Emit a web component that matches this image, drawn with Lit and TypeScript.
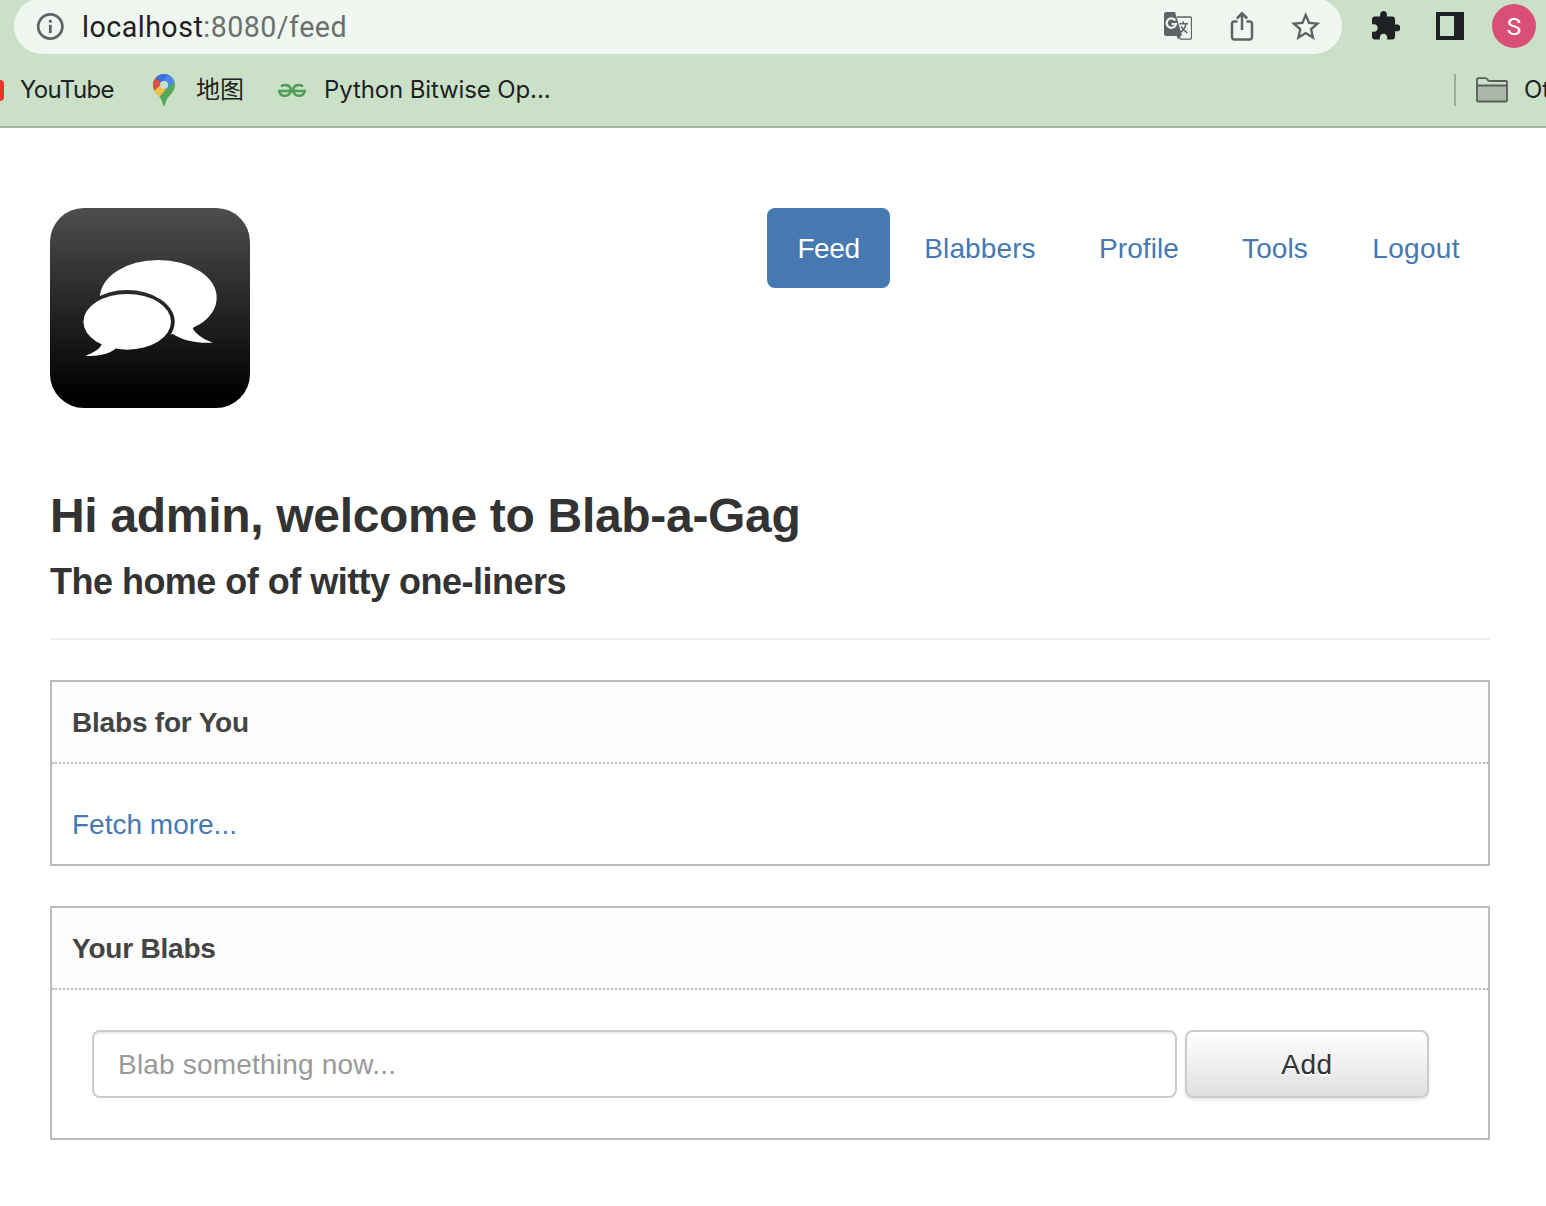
import { LitElement, html, css, svg } from "lit";
import { customElement } from "lit/decorators.js";

const infoIcon = svg`<svg class="i-info" viewBox="0 0 28 28" width="28" height="28"><circle cx="14.300" cy="14.500" r="12.100" fill="none" stroke="#5f6368" stroke-width="2.700"/><rect x="12.900" y="7.900" width="2.800" height="2.800" fill="#5f6368"/><rect x="12.900" y="12.900" width="2.800" height="8.100" fill="#5f6368"/></svg>`;

const translateIcon = svg`<svg viewBox="0 0 28 28" width="28" height="28"><path d="M13 5h13a1.500 1.500 0 0 1 1.500 1.500v19.200a1.500 1.500 0 0 1-1.500 1.500H16.500L13 22" fill="none" stroke="#5f6368" stroke-width="1.300"/><path d="M2 0h9l1.300 4.300 5.600 18.700-4 4.500L12.800 24H2a2 2 0 0 1-2-2V2a2 2 0 0 1 2-2z" fill="#5f6368"/><path d="M11.300 8.500A4.700 4.700 0 1 0 12 12H7.600" fill="none" stroke="#f0f7f0" stroke-width="2.200"/><path d="M15.500 11.700h8.500M19.200 9.300v2.400M22 12c-.8 3.800-3 6.800-6.500 9M17 14.200c1.200 2.600 3.200 4.800 6.400 6.800" fill="none" stroke="#5f6368" stroke-width="1.500"/></svg>`;

const shareIcon = svg`<svg viewBox="0 0 24 30" width="24" height="30"><path d="M7.500 10.500H4.200A2.200 2.200 0 0 0 2 12.700v13.600A2.200 2.200 0 0 0 4.200 28.500h15.600a2.200 2.200 0 0 0 2.200-2.200V12.700A2.200 2.200 0 0 0 19.800 10.500h-3.300M12 19V3M6.800 7.500L12 2.300 17.200 7.500" fill="none" stroke="#5f6368" stroke-width="2.500"/></svg>`;

const starIcon = svg`<svg viewBox="2 2 20 19" width="29.400" height="28"><path fill="#5f6368" d="M22 9.240l-7.190-.62L12 2 9.190 8.630 2 9.240l5.460 4.730L5.820 21 12 17.270 18.180 21l-1.630-7.030L22 9.240zM12 15.400l-3.760 2.270 1-4.280-3.320-2.880 4.380-.38L12 6.100l1.710 4.040 4.380.38-3.320 2.880 1 4.280L12 15.400z"/></svg>`;

const puzzleIcon = svg`<svg viewBox="2 1 21 21" width="28.500" height="28.500"><path fill="#202124" d="M20.500 11H19V7c0-1.100-.9-2-2-2h-4V3.500C13 2.120 11.880 1 10.500 1S8 2.120 8 3.500V5H4c-1.100 0-1.990.9-1.990 2v3.800H3.500c1.490 0 2.700 1.210 2.700 2.700s-1.210 2.700-2.700 2.700H2V20c0 1.100.9 2 2 2h3.800v-1.500c0-1.490 1.210-2.700 2.700-2.700 1.490 0 2.700 1.210 2.700 2.700V22H17c1.100 0 2-.9 2-2v-4h1.500c1.380 0 2.500-1.120 2.500-2.500S21.880 11 20.500 11z"/></svg>`;

const panelIcon = svg`<svg viewBox="0 0 28 28" width="28" height="28"><path fill="#202124" fill-rule="evenodd" d="M0 0h28v28H0zM4 4v20h14V4z"/></svg>`;

const mapsIcon = svg`<svg viewBox="0 0 22 32" width="22" height="32"><defs><clipPath id="pin"><path d="M11 0a11 11 0 0 1 11 11c0 7-4.500 8.800-7.600 13.500C12.400 27.600 12.300 32 11 32s-1.400-4.400-3.400-7.500C4.500 19.800 0 18 0 11A11 11 0 0 1 11 0z"/></clipPath></defs><g clip-path="url(#pin)"><rect width="22" height="32" fill="#57a75b"/><path d="M15 13L2 28-6 20 8 6z" fill="#f4c044"/><path d="M-2 19.500L11 8 2 2-4 8z" fill="#d8503f"/><path d="M2 3.500L8.500 9 18 0H2z" fill="#3871e0"/><path d="M8.500 9L16 0l6 7-9.500 9z" fill="#5186ec"/></g><circle cx="11" cy="11" r="4.100" fill="#cbe1c7"/></svg>`;

const geeksIcon = svg`<svg viewBox="0 0 28 16" width="28" height="16"><g fill="none" stroke="#4f9d58" stroke-width="2.600"><path d="M3 4.600C5.500 2 11.500 2.600 12.600 6.500c.8 4.300-1.800 7.300-5.600 7.300S1.500 12 1.500 8.500M25 4.600C22.500 2 16.500 2.600 15.400 6.500c-.8 4.300 1.800 7.300 5.600 7.300s5.500-1.800 5.500-5.300"/><path d="M0 9h28"/></g></svg>`;

const folderIcon = svg`<svg viewBox="0 0 32 26" width="32" height="26"><path d="M1 8.500h30V24H1z" fill="#a9b8a7"/><path d="M1 8.500V2.500A1.300 1.300 0 0 1 2.300 1.200H9.500c1.700 0 2.200 2.800 3.800 2.800H30a1 1 0 0 1 1 1v18.500a1 1 0 0 1-1 1H2a1 1 0 0 1-1-1V8.500h30" fill="none" stroke="#5a5d5a" stroke-width="1.800"/></svg>`;

const logo = svg`<svg viewBox="0 0 200 200" width="200" height="200"><defs><linearGradient id="shade" x1="0" y1="0" x2="0" y2="1"><stop offset="0" stop-color="#4e4e4e"/><stop offset=".95" stop-color="#000"/></linearGradient><mask id="gap"><rect width="200" height="200" fill="#fff"/><ellipse cx="77.200" cy="113.800" rx="47.500" ry="31.700" fill="#000"/></mask></defs><rect width="200" height="200" rx="34" fill="url(#shade)"/><g mask="url(#gap)" fill="#fff"><ellipse cx="108.300" cy="89.700" rx="58.400" ry="37.700"/><path d="M142.300 119.300C145 126 153 131 163 134.700 148 135.500 132 133 121.700 125.300L118 115z"/></g><ellipse cx="77.200" cy="113.800" rx="43.800" ry="27.900" fill="#fff"/><path d="M51.700 136.300C50 141 43 145 35.700 147.700 46 148.500 57 147 65.300 141L66 134z" fill="#fff"/></svg>`;

@customElement("app-root")
export class AppRoot extends LitElement {
  static styles = css`
    :host { display: block; height: 1206px; overflow: hidden; background: #fff; color: #333; font: 28px/40px "Liberation Sans", Arial, sans-serif; }
    * { box-sizing: border-box; }
    svg { display: block; flex: none; }
    .chrome { height: 128px; background: #cbe1c7; border-bottom: 2px solid #a3b4a0; color: #202124; overflow: hidden; }
    .toolbar { height: 54px; display: flex; align-items: center; }
    .omnibox { width: 1328px; height: 56px; margin: -2px 0 0 14px; border-radius: 28px; background: #f0f7f0; display: flex; align-items: center; padding: 0 21.500px 0 22px; flex: none; }
    .url { flex: 1; margin-left: 18px; padding-top: 1px; font: 28.600px/40px Roboto, sans-serif; letter-spacing: .48px; color: #6b706d; }
    .host { color: #202124; }
    .share { margin: 0 37.500px 0 38px; }
    .puzzle { margin: -3px 0 0 29.500px; }
    .panel { margin: -2px 0 0 36px; }
    .avatar { width: 44px; height: 44px; margin: -2px 0 0 28px; border-radius: 50%; background: #d94f78; color: #fff; font: 24.500px/45px Roboto, sans-serif; text-align: center; flex: none; }
    .bookmarks { height: 72px; display: flex; align-items: center; font: 24px/36px Inter, "Noto Sans CJK SC", sans-serif; white-space: nowrap; }
    .yt { width: 4px; height: 21px; background: #ee3324; border-radius: 0 4px 4px 0; margin-right: 16px; flex: none; }
    .youtube { width: 133px; letter-spacing: -.65px; }
    .maps { width: 82px; margin-left: 21px; }
    .py { margin-left: 18px; flex: 1; letter-spacing: -.12px; }
    .sep { width: 2px; height: 32px; background: #9aaf97; margin-right: 20px; flex: none; }
    .other { width: 22px; margin-left: 16px; overflow: hidden; flex: none; }
    .page { padding: 80px 56px 0 50px; }
    .top { display: flex; justify-content: space-between; align-items: flex-start; height: 200px; }
    .nav { display: flex; gap: 4px; }
    .pill { height: 80px; line-height: 82px; text-align: center; color: #4678b2; border-radius: 8px; letter-spacing: .1px; }
    .active { background: #4678b2; color: #fff; letter-spacing: -.4px; }
    .feed { width: 123px; } .blabbers { width: 172px; } .profile { width: 138px; } .tools { width: 126px; } .logout { width: 148px; letter-spacing: .3px; }
    h1, h2, h3 { margin: 0; white-space: nowrap; }
    h1 { margin-top: 80px; font-size: 48px; line-height: 56px; letter-spacing: -.31px; }
    h2 { margin-top: 18px; font-size: 36px; line-height: 40px; letter-spacing: -.52px; }
    .rule { height: 2px; background: #eee; margin: 36px 0 40px; }
    .box { border: 2px solid #bbb; margin-bottom: 40px; }
    h3 { height: 82px; padding-left: 20px; border-bottom: 2px dotted #bbb; background: #fdfdfd; color: #444; font-size: 28px; line-height: 82px; letter-spacing: -.2px; }
    .fetch { display: block; height: 100px; padding: 41px 0 0 20px; color: #4678b2; }
    .form { display: flex; gap: 8px; padding: 40px; height: 148px; }
    .input { width: 1085px; height: 68px; border: 2px solid #ccc; border-radius: 8px; padding: 2px 24px 0; font: inherit; letter-spacing: .2px; box-shadow: inset 0 2px 2px rgba(0,0,0,.075); outline: none; background: #fff; }
    .input::placeholder { color: #999; opacity: 1; }
    .add { width: 244px; height: 68px; border: 2px solid #ccc; border-radius: 8px; padding: 2px 0 0; font: inherit; letter-spacing: .5px; color: #333; background: linear-gradient(#fff, #e0e0e0); text-shadow: 0 2px 0 #fff; box-shadow: 0 2px 3px rgba(0,0,0,.1); }
  `;

  render() {
    return html`
      <div class="chrome">
        <div class="toolbar">
          <div class="omnibox">
            ${infoIcon}
            <div class="url"><span class="host">localhost</span>:8080/feed</div>
            ${translateIcon}
            <div class="share">${shareIcon}</div>
            ${starIcon}
          </div>
          <div class="puzzle">${puzzleIcon}</div>
          <div class="panel">${panelIcon}</div>
          <div class="avatar">S</div>
        </div>
        <div class="bookmarks">
          <div class="yt"></div><div class="youtube">YouTube</div>
          ${mapsIcon}<div class="maps">地图</div>
          ${geeksIcon}<div class="py">Python Bitwise Op...</div>
          <div class="sep"></div>${folderIcon}<div class="other">Other</div>
        </div>
      </div>
      <main class="page">
        <div class="top">
          ${logo}
          <nav class="nav">
            <a class="pill feed active">Feed</a><a class="pill blabbers">Blabbers</a><a class="pill profile">Profile</a><a class="pill tools">Tools</a><a class="pill logout">Logout</a>
          </nav>
        </div>
        <h1>Hi admin, welcome to Blab-a-Gag</h1>
        <h2>The home of of witty one-liners</h2>
        <div class="rule"></div>
        <section class="box"><h3>Blabs for You</h3><a class="fetch">Fetch more...</a></section>
        <section class="box"><h3>Your Blabs</h3>
          <div class="form"><input class="input" placeholder="Blab something now..."><button class="add">Add</button></div>
        </section>
      </main>`;
  }
}
